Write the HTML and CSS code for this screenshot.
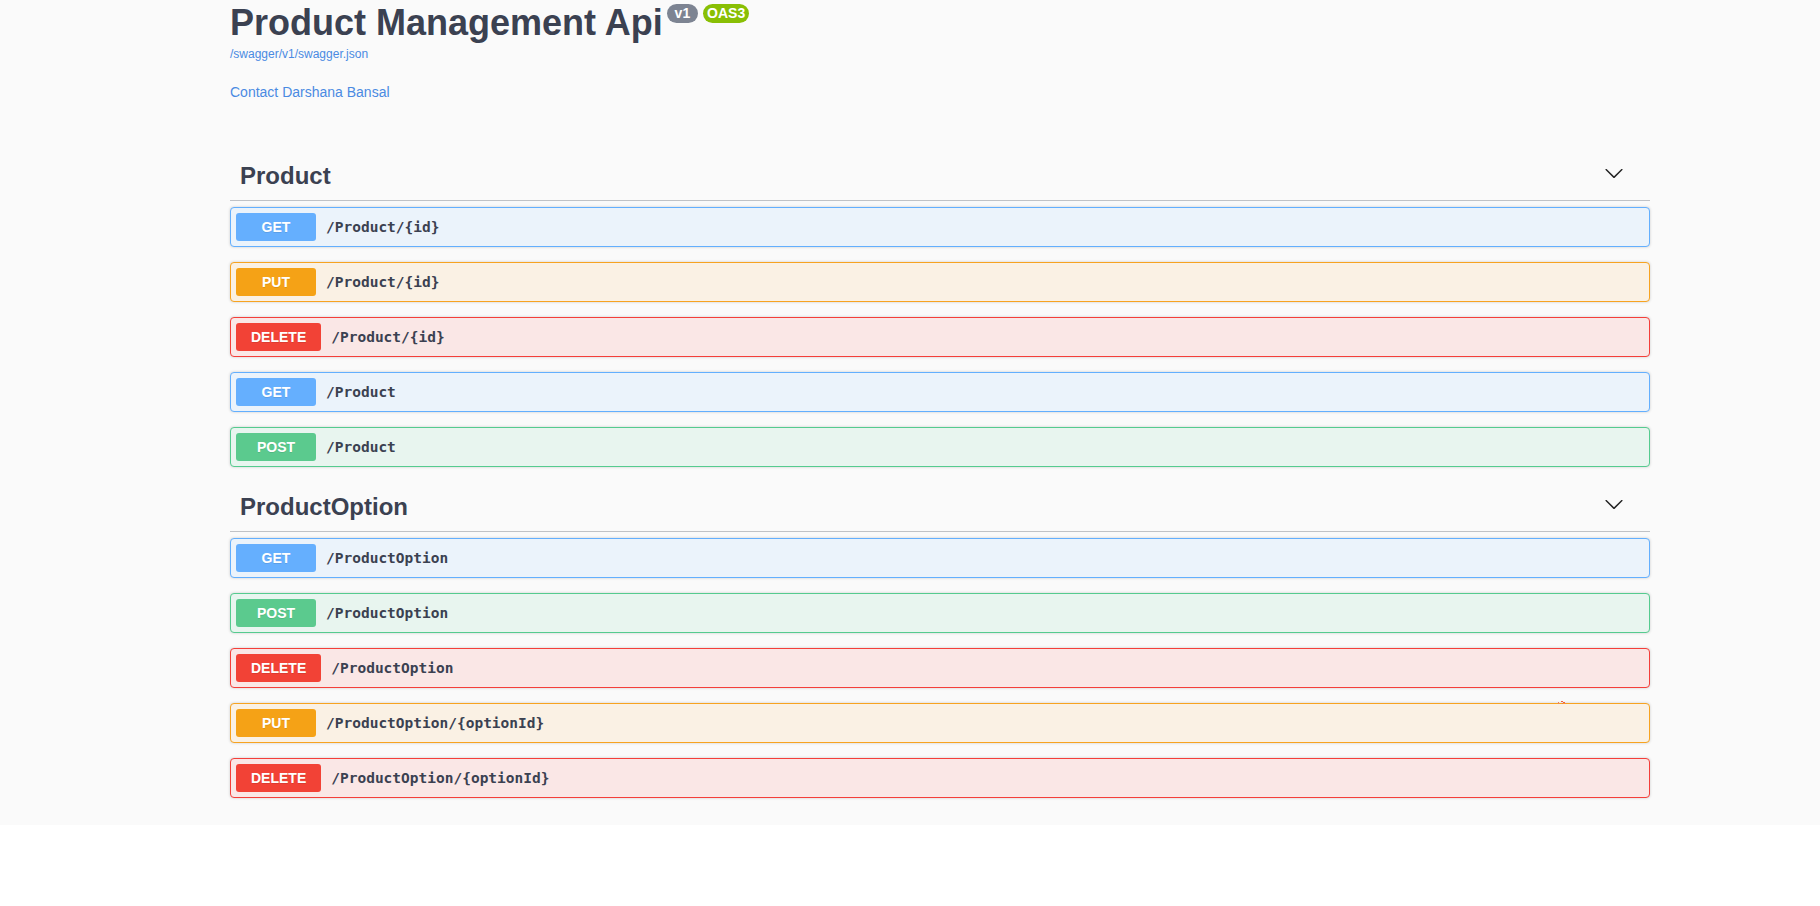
FILE: index.html
```html
<!DOCTYPE html>
<html lang="en">
<head>
<meta charset="utf-8">
<title>Product Management Api</title>
<link rel="stylesheet" href="styles.css">
</head>
<body>
<div class="page">
  <div class="wrapper">
    <div class="info">
      <h2 class="title"><span class="title-text">Product Management Api</span><small class="badge badge-version"> v1 </small><small class="badge badge-oas">OAS3</small></h2>
      <a class="url" href="#">/swagger/v1/swagger.json</a>
      <a class="contact" href="#">Contact Darshana Bansal</a>
    </div>

    <section class="tag-section">
      <h3 class="tag">
        <span class="tag-name">Product</span>
        <svg class="arrow" width="20" height="20" viewBox="0 0 20 20"><path d="M17.418 6.109c.272-.268.709-.268.979 0s.271.701 0 .969l-7.908 7.83c-.27.268-.707.268-.979 0l-7.908-7.830c-.27-.268-.27-.701 0-.969.271-.268.709-.268.979 0L10 13.25l7.418-7.141z"/></svg>
      </h3>
      <div class="op op-get"><span class="method">GET</span><span class="path">/Product/{id}</span></div>
      <div class="op op-put"><span class="method">PUT</span><span class="path">/Product/{id}</span></div>
      <div class="op op-delete"><span class="method">DELETE</span><span class="path">/Product/{id}</span></div>
      <div class="op op-get"><span class="method">GET</span><span class="path">/Product</span></div>
      <div class="op op-post"><span class="method">POST</span><span class="path">/Product</span></div>
    </section>

    <section class="tag-section">
      <h3 class="tag">
        <span class="tag-name">ProductOption</span>
        <svg class="arrow" width="20" height="20" viewBox="0 0 20 20"><path d="M17.418 6.109c.272-.268.709-.268.979 0s.271.701 0 .969l-7.908 7.83c-.27.268-.707.268-.979 0l-7.908-7.830c-.27-.268-.27-.701 0-.969.271-.268.709-.268.979 0L10 13.25l7.418-7.141z"/></svg>
      </h3>
      <div class="op op-get"><span class="method">GET</span><span class="path">/ProductOption</span></div>
      <div class="op op-post"><span class="method">POST</span><span class="path">/ProductOption</span></div>
      <div class="op op-delete"><span class="method">DELETE</span><span class="path">/ProductOption</span></div>
      <div class="op op-put"><span class="method">PUT</span><span class="path">/ProductOption/{optionId}</span>
        <svg class="cursor-mark" width="10" height="5" viewBox="0 0 10 5"><rect x="0" y="2" width="1" height="2" fill="#f08060"/><rect x="3" y="1" width="2" height="1" fill="#f06040"/><rect x="5" y="2" width="2" height="1" fill="#f06040"/><rect x="4" y="3" width="1" height="1" fill="#f07050"/><rect x="7" y="3" width="1" height="1" fill="#f08060"/></svg>
      </div>
      <div class="op op-delete"><span class="method">DELETE</span><span class="path">/ProductOption/{optionId}</span></div>
    </section>
  </div>
</div>
</body>
</html>
```

FILE: styles.css
```css
html, body {
  margin: 0;
  padding: 0;
  background: #ffffff;
}

body {
  font-family: "Liberation Sans", Arial, sans-serif;
  color: #3b4151;
}

.page {
  background: #fafafa;
  padding-bottom: 12px;
}

.wrapper {
  width: 1420px;
  margin-left: 230px;
}

.info {
  display: flex;
  flex-direction: column;
  align-items: flex-start;
  margin-bottom: 51px;
}

.title {
  display: flex;
  align-items: flex-start;
  margin: 0;
  padding-top: 2px;
  font-size: 36px;
  line-height: 41px;
  font-weight: 700;
  color: #3b4151;
}

.badge {
  display: inline-block;
  margin-top: 2px;
  margin-left: 4px;
  padding: 2px 4px;
  border-radius: 57px;
  font-size: 14px;
  line-height: 15px;
  font-weight: 700;
  color: #ffffff;
  white-space: pre;
  background: #7d8492;
}

.badge-oas {
  margin-left: 5px;
  background: #89bf04;
}

.url {
  margin-top: 4px;
  font-size: 12px;
  line-height: 14px;
  color: #4a8ae2;
  text-decoration: none;
}

.contact {
  margin-top: 23px;
  font-size: 14px;
  line-height: 16px;
  color: #4a8ae2;
  text-decoration: none;
}

.tag-section {
  display: flex;
  flex-direction: column;
}

.tag {
  display: flex;
  align-items: flex-start;
  margin: 0 0 6px;
  padding: 10px 20px 10px 10px;
  border-bottom: 1px solid rgba(59, 65, 81, 0.3);
  font-size: 24px;
  line-height: 29px;
  font-weight: 700;
  color: #3b4151;
}

.tag-name {
  flex: 1;
}

.arrow {
  margin-top: 2px;
  margin-right: 6px;
  fill: #222222;
}

.op {
  position: relative;
  display: flex;
  align-items: center;
  margin: 0 0 15px;
  padding: 5px;
  border: 1px solid #000;
  border-radius: 4px;
  box-shadow: 0 0 3px rgba(0, 0, 0, 0.19);
}

.method {
  box-sizing: border-box;
  min-width: 80px;
  padding: 6px 15px;
  border-radius: 3px;
  font-size: 14px;
  line-height: 16px;
  font-weight: 700;
  text-align: center;
  color: #ffffff;
  text-shadow: 0 1px 0 rgba(0, 0, 0, 0.1);
}

.path {
  padding: 0 10px;
  font-family: "DejaVu Sans Mono", "Liberation Mono", monospace;
  font-size: 14.5px;
  font-weight: 700;
  color: #3b4151;
}

.op-get {
  background: #ebf3fb;
  border-color: #63affe;
}
.op-get .method {
  background: #65affe;
}

.op-put {
  background: #faf1e4;
  border-color: #f7a320;
}
.op-put .method {
  background: #f5a216;
}

.op-delete {
  background: #fae7e6;
  border-color: #f43f3a;
}
.op-delete .method {
  background: #f24236;
}

.op-post {
  background: #e8f5ef;
  border-color: #55cb8f;
}
.op-post .method {
  background: #5bca8e;
}

.cursor-mark {
  position: absolute;
  left: 1327px;
  top: -4px;
}
```
